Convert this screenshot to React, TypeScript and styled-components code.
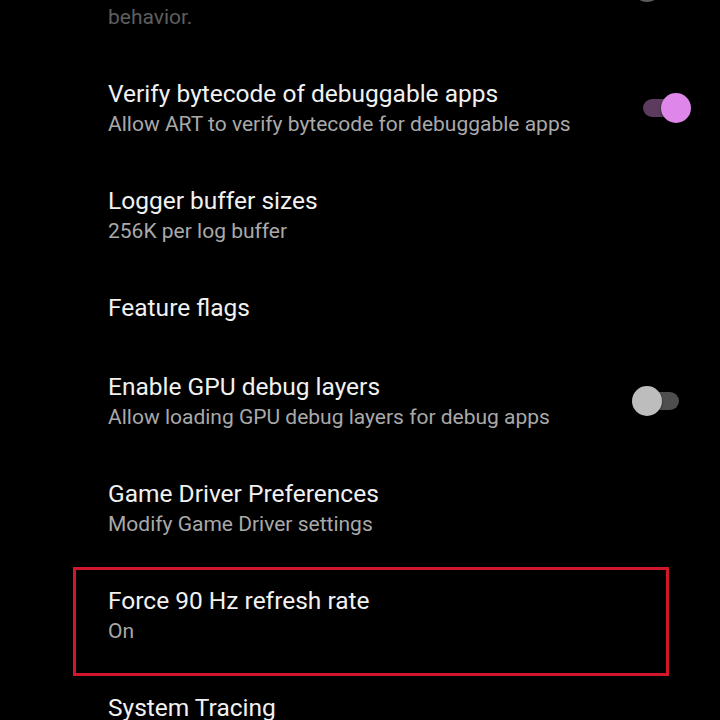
import React from "react";
import styled, { createGlobalStyle } from "styled-components";

const Global = createGlobalStyle`
  html, body { margin: 0; padding: 0; background: #000; }
  body { font-family: Roboto, "Noto Sans", "Liberation Sans", sans-serif; }
`;

const Screen = styled.div`
  width: 720px;
  height: 720px;
  overflow: hidden;
  background: #000;
`;

const List = styled.div`
  display: flex;
  flex-direction: column;
  margin-top: -79px;
`;

const Row = styled.div`
  position: relative;
  display: flex;
  align-items: center;
  padding: 22px 29px 25px 108px;
`;

const Texts = styled.div`
  flex: 1;
  min-width: 0;
  display: flex;
  flex-direction: column;
  padding-right: 20px;
`;

const Title = styled.div<{ $disabled?: boolean }>`
  font-size: 24.5px;
  line-height: 32px;
  color: ${(p) => (p.$disabled ? "#6a6a6a" : "#f1f1f1")};
`;

const Summary = styled.div<{ $disabled?: boolean }>`
  font-size: 21px;
  line-height: 28px;
  color: ${(p) => (p.$disabled ? "#5e5e5e" : "#a9a9a9")};
`;

const SwitchBox = styled.div`
  position: relative;
  width: 59px;
  height: 30px;
  flex: none;
`;

const Track = styled.div<{ $on?: boolean; $disabled?: boolean }>`
  position: absolute;
  left: 11px;
  top: 6px;
  width: 36px;
  height: 18px;
  border-radius: 9px;
  background: ${(p) => (p.$on ? "#5b3b5e" : p.$disabled ? "#2c2c2c" : "#4e4e4e")};
`;

const Thumb = styled.div<{ $on?: boolean; $disabled?: boolean }>`
  position: absolute;
  top: 0;
  left: ${(p) => (p.$on ? "29px" : "0")};
  width: 30px;
  height: 30px;
  border-radius: 50%;
  background: ${(p) => (p.$on ? "#de86ea" : p.$disabled ? "#5c5c5c" : "#bdbdbd")};
  box-shadow: 0 1px 2px rgba(0, 0, 0, 0.6);
`;

const Highlight = styled.div`
  position: absolute;
  left: 73px;
  right: 51px;
  top: 4px;
  bottom: -6px;
  border: 3px solid #d3172a;
  pointer-events: none;
`;

type Item = {
  title: string;
  summary?: string;
  toggle?: "on" | "off";
  disabled?: boolean;
  highlight?: boolean;
};

const items: Item[] = [
  {
    title: "Verify apps over USB",
    summary: "Check apps installed via ADB/ADT for harmful behavior.",
    toggle: "off",
    disabled: true,
  },
  {
    title: "Verify bytecode of debuggable apps",
    summary: "Allow ART to verify bytecode for debuggable apps",
    toggle: "on",
  },
  { title: "Logger buffer sizes", summary: "256K per log buffer" },
  { title: "Feature flags" },
  {
    title: "Enable GPU debug layers",
    summary: "Allow loading GPU debug layers for debug apps",
    toggle: "off",
  },
  { title: "Game Driver Preferences", summary: "Modify Game Driver settings" },
  { title: "Force 90 Hz refresh rate", summary: "On", highlight: true },
  { title: "System Tracing", summary: "Record system traces" },
];

const Switch = ({ on, disabled }: { on: boolean; disabled?: boolean }) => (
  <SwitchBox>
    <Track $on={on} $disabled={disabled} />
    <Thumb $on={on} $disabled={disabled} />
  </SwitchBox>
);

export default function App() {
  return (
    <Screen>
      <Global />
      <List>
        {items.map((it) => (
          <Row key={it.title}>
            <Texts>
              <Title $disabled={it.disabled}>{it.title}</Title>
              {it.summary && <Summary $disabled={it.disabled}>{it.summary}</Summary>}
            </Texts>
            {it.toggle && <Switch on={it.toggle === "on"} disabled={it.disabled} />}
            {it.highlight && <Highlight />}
          </Row>
        ))}
      </List>
    </Screen>
  );
}
